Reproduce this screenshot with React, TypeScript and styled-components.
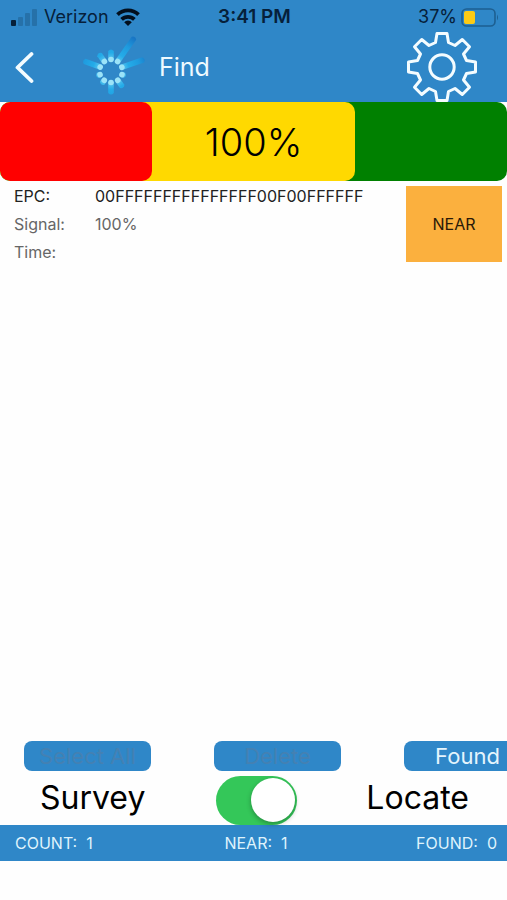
import React, { useState } from "react";
import styled, { createGlobalStyle } from "styled-components";

const BLUE = "#2f87c8";

const GlobalStyle = createGlobalStyle`
  *, *::before, *::after { box-sizing: border-box; }
  body {
    margin: 0;
    background: #fefefe;
    font-family: Inter, "Liberation Sans", sans-serif;
    color: #000;
    overflow-x: hidden;
  }
  button { font: inherit; border: 0; padding: 0; margin: 0; cursor: pointer; }
  button:disabled { cursor: default; }
`;

const Screen = styled.div`
  display: flex;
  flex-direction: column;
  min-height: 100vh;
  overflow: hidden;
`;

const Header = styled.header`
  background: ${BLUE};
`;

const StatusBar = styled.div`
  display: grid;
  grid-template-columns: 1fr auto 1fr;
  align-items: center;
  height: 32px;
  padding: 2px 8px 0 10px;
  font-size: 18px;
  line-height: 24px;
  color: #06203a;
`;

const StatusGroup = styled.div<{ $end?: boolean }>`
  display: flex;
  align-items: center;
  justify-content: ${(p) => (p.$end ? "flex-end" : "flex-start")};
  gap: ${(p) => (p.$end ? 4 : 7)}px;
`;

const Clock = styled.time`
  font-size: 19px;
  font-weight: 600;
`;

const NavBar = styled.nav`
  display: flex;
  align-items: center;
  height: 70px;
  padding: 0 30px 0 12px;
`;

const IconButton = styled.button`
  display: flex;
  background: none;
  color: #f4fcff;
`;

const Spinner = styled.svg`
  margin-left: 41px;
`;

const Title = styled.h1`
  flex: 1;
  margin: 0 0 0 6px;
  font-size: 25px;
  line-height: 32px;
  font-weight: 400;
  color: #eefaff;
`;

const Meter = styled.section`
  display: grid;
  grid-template-columns: repeat(10, 1fr);
  height: 79px;
  border-radius: 10px;
  background: #008000;
  overflow: hidden;
`;

const Zone = styled.div<{ $color: string; $span: string; $layer: number }>`
  grid-row: 1;
  grid-column: ${(p) => p.$span};
  z-index: ${(p) => p.$layer};
  border-radius: 10px;
  background: ${(p) => p.$color};
`;

const MeterValue = styled.div`
  grid-row: 1;
  grid-column: 1 / -1;
  z-index: 3;
  align-self: center;
  text-align: center;
  font-size: 38px;
  line-height: 44px;
  font-weight: 300;
`;

const TagRow = styled.article`
  display: flex;
  justify-content: space-between;
  padding: 5px 5px 0 14px;
`;

const Details = styled.dl`
  display: grid;
  grid-template-columns: 81px auto;
  grid-auto-rows: 28px;
  margin: 0;
  font-size: 16px;
  line-height: 20px;
`;

const Term = styled.dt<{ $strong?: boolean }>`
  color: ${(p) => (p.$strong ? "#222" : "#666")};
`;

const Value = styled.dd<{ $strong?: boolean }>`
  margin: 0;
  color: ${(p) => (p.$strong ? "#222" : "#666")};
`;

const NearBadge = styled.div`
  display: grid;
  place-items: center;
  width: 96px;
  height: 76px;
  background: #fbb03e;
  color: #2a1a08;
  font-size: 16px;
`;

const Bottom = styled.footer`
  margin-top: auto;
  padding-bottom: 39px;
`;

const Actions = styled.div`
  display: flex;
  gap: 63px;
  padding-left: 24px;
`;

const ActionButton = styled.button`
  flex: 0 0 127px;
  height: 30px;
  border-radius: 8px;
  background: ${BLUE};
  color: #e4f5fd;
  font-size: 22px;
  line-height: 30px;
  &:disabled { color: #4481b3; }
`;

const ModeRow = styled.div`
  display: grid;
  grid-template-columns: 1fr 81px 1fr;
  align-items: center;
  height: 54px;
  padding: 4px 0 0 6px;
  font-size: 32px;
  line-height: 44px;
`;

const ModeLabel = styled.span<{ $end?: boolean }>`
  padding: ${(p) => (p.$end ? "0 38px 4px 0" : "0 0 4px 34px")};
  text-align: ${(p) => (p.$end ? "right" : "left")};
`;

const Switch = styled.input`
  appearance: none;
  display: flex;
  align-items: center;
  width: 81px;
  height: 49px;
  margin: 0;
  padding: 2px;
  border-radius: 25px;
  background: #d8d8dc;
  cursor: pointer;
  &::before {
    content: "";
    width: 44px;
    height: 44px;
    border-radius: 50%;
    background: #fff;
    box-shadow: 0 2px 5px rgba(0, 0, 0, 0.3);
  }
  &:checked { background: #34c759; justify-content: flex-end; }
`;

const Totals = styled.div`
  display: grid;
  grid-template-columns: 1fr auto 1fr;
  align-items: center;
  height: 36px;
  padding: 0 10px 0 15px;
  background: ${BLUE};
  color: #dff3fc;
  font-size: 16px;
  white-space: pre;
`;

const Total = styled.span<{ $end?: boolean }>`
  text-align: ${(p) => (p.$end ? "right" : "left")};
`;

const RAYS = [
  { angle: 0, length: 20 },
  { angle: 35, length: 40 },
  { angle: 71, length: 34 },
  { angle: 108, length: 14 },
  { angle: 144, length: 19 },
  { angle: 180, length: 22 },
  { angle: 216, length: 15 },
  { angle: 252, length: 14 },
  { angle: 290, length: 28 },
  { angle: 325, length: 20 },
];

function SpinnerIcon() {
  return (
    <Spinner width="76" height="64" viewBox="-34 -36 76 64" aria-hidden="true">
      <defs>
        <linearGradient id="ray" gradientUnits="userSpaceOnUse" x1="0" y1="-9" x2="0" y2="-40">
          <stop offset="0" stopColor="#7fdcf8" />
          <stop offset="0.3" stopColor="#22b2ee" />
          <stop offset="0.65" stopColor="#1c9ee2" />
          <stop offset="1" stopColor="#1573c4" />
        </linearGradient>
      </defs>
      {RAYS.map((r) => (
        <g key={r.angle} transform={`rotate(${r.angle})`}>
          <path
            d={`M-2.8 -11 L-2.8 ${-r.length} Q0 ${-r.length - 3} 2.8 ${-r.length} L2.8 -11 Z`}
            fill="url(#ray)"
            opacity="0.85"
          />
          <circle cy="-11.5" r="2.8" fill="#9be3f8" />
        </g>
      ))}
    </Spinner>
  );
}

function GearIcon() {
  return (
    <svg width="70" height="70" viewBox="-35 -35 70 70" fill="none" stroke="currentColor" strokeWidth="3" aria-hidden="true">
      <circle r="12.2" />
      <path
        strokeLinejoin="round"
        d="M-5 -33.5H5L6.5 -24.5L13 -21.5L20.3 -27.5L27.5 -20.3L21.5 -13L24.5 -6.5L33.5 -5V5L24.5 6.5L21.5 13L27.5 20.3L20.3 27.5L13 21.5L6.5 24.5L5 33.5H-5L-6.5 24.5L-13 21.5L-20.3 27.5L-27.5 20.3L-21.5 13L-24.5 6.5L-33.5 5V-5L-24.5 -6.5L-21.5 -13L-27.5 -20.3L-20.3 -27.5L-13 -21.5L-6.5 -24.5Z"
      />
    </svg>
  );
}

export default function App() {
  const [locate, setLocate] = useState(true);
  return (
    <>
      <GlobalStyle />
      <Screen>
        <Header>
          <StatusBar>
            <StatusGroup>
              <svg width="27" height="17" viewBox="0 0 27 17" aria-hidden="true">
                <rect x="1" y="11" width="5" height="6" rx="1" fill="#06203a" />
                <g fill="#2671a9">
                  <rect x="8" y="8" width="5" height="9" rx="1" />
                  <rect x="15" y="4" width="5" height="13" rx="1" />
                  <rect x="22" y="0" width="5" height="17" rx="1" />
                </g>
              </svg>
              <span>Verizon</span>
              <svg width="24" height="18" viewBox="0 0 24 18" fill="none" stroke="#020f1e" strokeWidth="3.8" aria-hidden="true">
                <path d="M1.5 6.6A15 15 0 0 1 22.5 6.6" />
                <path d="M5.6 11.4A9.2 9.2 0 0 1 18.4 11.4" />
                <path d="M12 18L8.2 14.3A5 5 0 0 1 15.8 14.3Z" fill="#020f1e" stroke="none" />
              </svg>
            </StatusGroup>
            <Clock>3:41 PM</Clock>
            <StatusGroup $end>
              <span>37%</span>
              <svg width="38" height="19" viewBox="0 0 38 19" aria-hidden="true">
                <rect x="1" y="1" width="33" height="17" rx="4.5" fill="none" stroke="#1d5f91" strokeWidth="1.6" />
                <rect x="3" y="3" width="11" height="13" rx="2" fill="#fdcb15" />
                <path d="M36 6.5Q38 9.5 36 12.5Z" fill="#1d5f91" />
              </svg>
            </StatusGroup>
          </StatusBar>
          <NavBar>
            <IconButton type="button" aria-label="Back">
              <svg width="24" height="32" viewBox="0 0 24 32" fill="none" stroke="currentColor" strokeWidth="3.8" strokeLinecap="round" strokeLinejoin="round" aria-hidden="true">
                <path d="M19.5 3L5.5 16.5L19.5 30" />
              </svg>
            </IconButton>
            <SpinnerIcon />
            <Title>Find</Title>
            <IconButton type="button" aria-label="Settings">
              <GearIcon />
            </IconButton>
          </NavBar>
        </Header>

        <Meter aria-label="Signal strength">
          <Zone $color="#ffd900" $span="1 / 8" $layer={1} />
          <Zone $color="#ff0000" $span="1 / 4" $layer={2} />
          <MeterValue>100%</MeterValue>
        </Meter>

        <TagRow>
          <Details>
            <Term $strong>EPC:</Term>
            <Value $strong>00FFFFFFFFFFFFFFF00F00FFFFFF</Value>
            <Term>Signal:</Term>
            <Value>100%</Value>
            <Term>Time:</Term>
            <Value />
          </Details>
          <NearBadge>NEAR</NearBadge>
        </TagRow>

        <Bottom>
          <Actions>
            <ActionButton type="button" disabled>Select All</ActionButton>
            <ActionButton type="button" disabled>Delete</ActionButton>
            <ActionButton type="button">Found</ActionButton>
          </Actions>
          <ModeRow>
            <ModeLabel id="mode-survey">Survey</ModeLabel>
            <Switch
              type="checkbox"
              role="switch"
              aria-labelledby="mode-survey mode-locate"
              checked={locate}
              onChange={(e) => setLocate(e.target.checked)}
            />
            <ModeLabel id="mode-locate" $end>Locate</ModeLabel>
          </ModeRow>
          <Totals>
            <Total>COUNT:  1</Total>
            <Total>NEAR:  1</Total>
            <Total $end>FOUND:  0</Total>
          </Totals>
        </Bottom>
      </Screen>
    </>
  );
}
